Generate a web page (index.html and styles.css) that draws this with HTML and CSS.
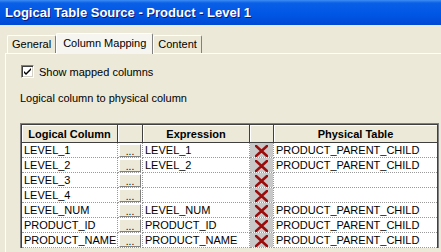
FILE: index.html
```html
<!DOCTYPE html>
<html lang="en">
<head>
  <meta charset="UTF-8" />
  <title>Logical Table Source - Product - Level 1</title>
  <link rel="stylesheet" href="styles.css">
</head>
<body>

  <div class="titlebar">Logical Table Source - Product - Level 1</div>

  <!-- Pestañas -->
  <div class="tabs">
    <div class="tab">General</div>
    <div class="tab active">Column Mapping</div>
    <div class="tab">Content</div>
  </div>

  <div class="panel">
    <label class="check-row">
      <span class="checkbox">
        <svg width="11" height="11" viewBox="0 0 11 11">
          <path d="M2 5 L4 7 L9 2 L9 4 L4 9 L2 7 Z" fill="#000"/>
        </svg>
      </span>
      Show mapped columns
    </label>

    <p class="caption">Logical column to physical column</p>

    <div class="grid-wrap">
      <table class="grid">
        <colgroup>
          <col class="c-logical">
          <col class="c-btn">
          <col class="c-expr">
          <col class="c-del">
          <col class="c-phys">
        </colgroup>
        <thead>
          <tr>
            <th>Logical Column</th>
            <th></th>
            <th>Expression</th>
            <th></th>
            <th>Physical Table</th>
          </tr>
        </thead>
        <tbody id="rows"></tbody>
      </table>
    </div>
  </div>

  <script>
    const rows = [
      ["LEVEL_1", "LEVEL_1", "PRODUCT_PARENT_CHILD"],
      ["LEVEL_2", "LEVEL_2", "PRODUCT_PARENT_CHILD"],
      ["LEVEL_3", "", ""],
      ["LEVEL_4", "", ""],
      ["LEVEL_NUM", "LEVEL_NUM", "PRODUCT_PARENT_CHILD"],
      ["PRODUCT_ID", "PRODUCT_ID", "PRODUCT_PARENT_CHILD"],
      ["PRODUCT_NAME", "PRODUCT_NAME", "PRODUCT_PARENT_CHILD"]
    ];

    const xIcon = `<svg width="13" height="12" viewBox="0 0 13 12">
      <path d="M1 1 L12 11 M12 1 L1 11" stroke="#9b0d0d" stroke-width="2.6" stroke-linecap="square"/>
    </svg>`;

    const body = document.getElementById("rows");
    rows.forEach(([logical, expr, phys]) => {
      const tr = document.createElement("tr");
      tr.innerHTML = `
        <td>${logical}</td>
        <td class="btn-cell"><span class="dots">...</span></td>
        <td>${expr}</td>
        <td class="del-cell">${xIcon}</td>
        <td>${phys}</td>`;
      body.appendChild(tr);
    });
  </script>
</body>
</html>
```

FILE: styles.css
```css
:root {
  --fondo: #ece9d8;
  --azul: #0055e3;
  --borde-oscuro: #404040;
  --borde-gris: #808080;
  --punteado: #9a9a9a;
  --blanco: #fff;
  --fuente: "Liberation Sans", Arial, sans-serif;
}
* { box-sizing: border-box; margin: 0; padding: 0; }
body {
  width: 441px;
  height: 252px;
  overflow: hidden;
  font-family: var(--fuente);
  font-size: 11px;
  color: #000;
  background: var(--fondo);
}

/* Barra de título */
.titlebar {
  height: 25px;
  line-height: 25px;
  padding-left: 5px;
  font-size: 13px;
  font-weight: bold;
  color: var(--blanco);
  text-shadow: 1px 1px #0a1a80;
  background: linear-gradient(#3d8cf5 0, #0a5fe6 3px, #0057e5 55%, #0049d4 100%);
}

/* Pestañas */
.tabs {
  display: flex;
  align-items: flex-end;
  height: 28px;
  padding-left: 7px;
}
.tab {
  height: 18px;
  line-height: 16px;
  padding: 0 4px;
  border-top: 1px solid var(--blanco);
  border-left: 1px solid var(--blanco);
  border-right: 1px solid var(--borde-gris);
  border-radius: 2px 2px 0 0;
  position: relative;
}
.tab.active {
  height: 21px;
  line-height: 19px;
  padding: 0 6px;
  margin-bottom: -1px;
  background: #f6f5ef;
  z-index: 1;
}

.panel {
  margin-left: 5px;
  border-top: 1px solid var(--blanco);
  border-left: 1px solid var(--blanco);
  padding: 11px 0 0 14px;
  height: 199px;
}

.check-row {
  display: flex;
  align-items: center;
  gap: 5px;
  margin-left: 1px;
  height: 13px;
}
.checkbox {
  width: 13px;
  height: 13px;
  background: var(--blanco);
  border-top: 1px solid var(--borde-gris);
  border-left: 1px solid var(--borde-gris);
  border-bottom: 1px solid var(--blanco);
  border-right: 1px solid var(--blanco);
  box-shadow: inset 1px 1px var(--borde-oscuro), inset -1px -1px #d4d0c8;
  display: flex;
}

.caption {
  margin-top: 14px;
  line-height: 13px;
}

/* Rejilla */
.grid-wrap {
  margin-top: 18px;
  width: 419px;
  border-top: 1px solid var(--borde-gris);
  border-left: 1px solid var(--borde-gris);
  border-right: 1px solid var(--borde-gris);
}
.grid {
  width: 417px;
  table-layout: fixed;
  border-collapse: collapse;
  border-top: 1px solid var(--borde-oscuro);
  border-left: 1px solid var(--borde-oscuro);
  border-right: 1px solid var(--borde-oscuro);
  background: var(--blanco);
}
.c-logical { width: 96px; }
.c-btn     { width: 25px; }
.c-expr    { width: 107px; }
.c-del     { width: 24px; }
.c-phys    { width: 164px; }

.grid th {
  height: 18px;
  padding: 0;
  font-size: 11px;
  font-weight: bold;
  text-align: center;
  background: var(--fondo);
  border-right: 1px solid var(--borde-oscuro);
  border-bottom: 1px solid var(--borde-oscuro);
  box-shadow: inset 1px 1px var(--blanco);
}
.grid td {
  height: 15px;
  padding: 0 0 0 2px;
  line-height: 13px;
  white-space: nowrap;
  overflow: hidden;
  border-right: 1px dotted var(--punteado);
  border-bottom: 1px dotted var(--punteado);
}
.grid td:last-child { border-right: none; }

.btn-cell { padding: 0 !important; }
.dots {
  display: block;
  width: 22px;
  height: 13px;
  margin: 0 auto;
  line-height: 14px;
  text-align: center;
  font-size: 10px;
  background: var(--fondo);
  border-top: 1px solid var(--blanco);
  border-left: 1px solid var(--blanco);
  border-right: 1px solid var(--borde-gris);
  border-bottom: 1px solid var(--borde-gris);
}

.del-cell {
  padding: 0 !important;
  text-align: center;
  background: #c8c8c8;
}
.del-cell svg { display: block; margin: 1px auto 0; }
```
